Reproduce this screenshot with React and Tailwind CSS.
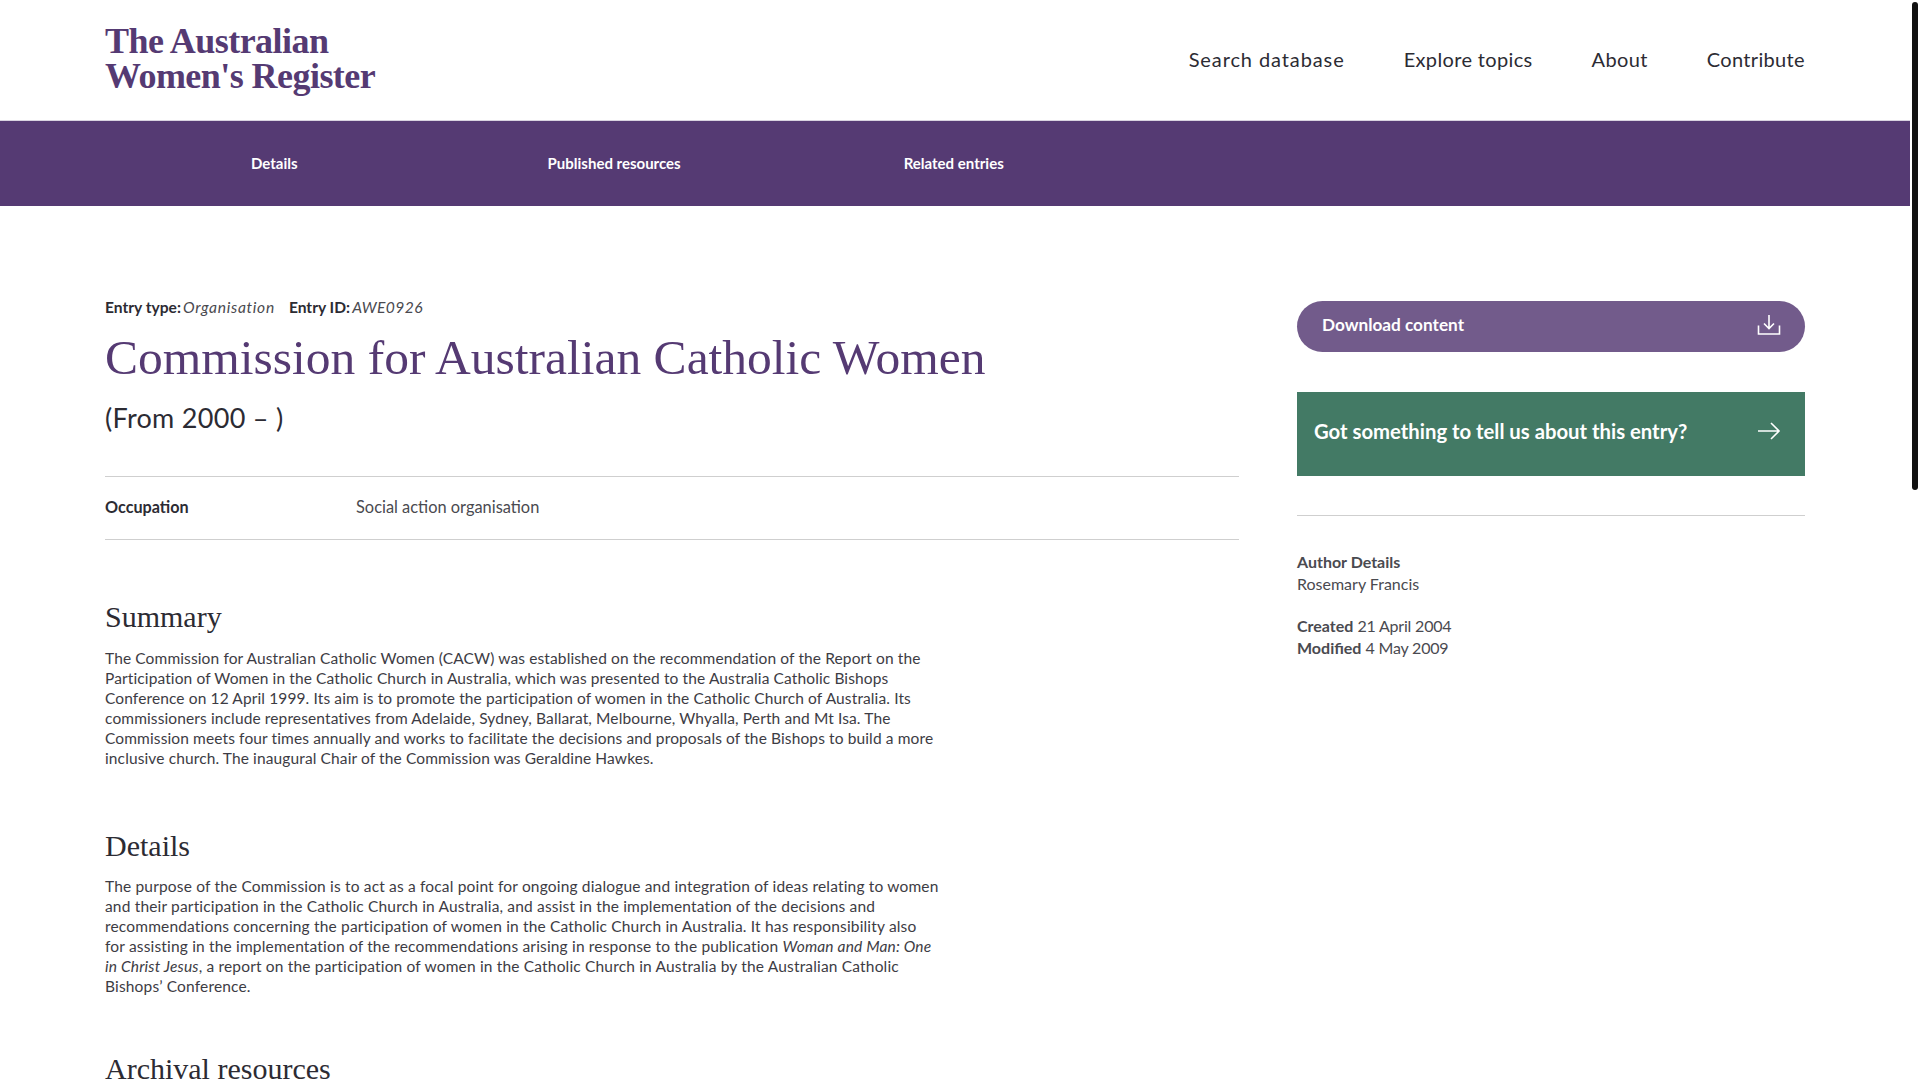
import React from 'react';

const sans = 'font-["Lato","Noto_Sans",sans-serif]';
const serif = 'font-["Liberation_Serif",serif]';

const summaryLines = [
  'The Commission for Australian Catholic Women (CACW) was established on the recommendation of the Report on the',
  'Participation of Women in the Catholic Church in Australia, which was presented to the Australia Catholic Bishops',
  'Conference on 12 April 1999. Its aim is to promote the participation of women in the Catholic Church of Australia. Its',
  'commissioners include representatives from Adelaide, Sydney, Ballarat, Melbourne, Whyalla, Perth and Mt Isa. The',
  'Commission meets four times annually and works to facilitate the decisions and proposals of the Bishops to build a more',
  'inclusive church. The inaugural Chair of the Commission was Geraldine Hawkes.',
];

const DownloadIcon = () => (
  <svg width="24" height="22" viewBox="0 0 24 22" fill="none" stroke="currentColor" strokeWidth="1.6">
    <path d="M12 1v13M7 9.5l5 5 5-5" />
    <path d="M1.5 11.5v8.5h21v-8.5" />
  </svg>
);

const ArrowIcon = () => (
  <svg width="24" height="20" viewBox="0 0 24 20" fill="none" stroke="currentColor" strokeWidth="1.6">
    <path d="M1 10h21M14 2l8 8-8 8" />
  </svg>
);

const Line = ({ children }) => <span className="block whitespace-nowrap">{children}</span>;

export default function App() {
  return (
    <div className={`${sans} h-screen w-full overflow-hidden bg-white flex text-[#2c2b33]`}>
      <div className="w-[1910px] shrink-0">
        <header className="h-[121px] border-b border-[#d8d3e0] px-[105px] flex items-center justify-between">
          <div className={`${serif} font-bold text-[36px] leading-[35px] text-[#553a73] tracking-[-0.55px] pb-[3px]`}>
            <div>The Australian</div>
            <div>Women's Register</div>
          </div>
          <nav className="flex gap-[59px] text-[20px] tracking-[0.35px] pb-[2px] text-[#2c2b33]">
            <a className="tracking-[0.9px]">Search database</a>
            <a>Explore topics</a>
            <a>About</a>
            <a>Contribute</a>
          </nav>
        </header>

        <div className="h-[85px] bg-[#553a73] text-white text-[15px] font-bold flex items-center">
          <a className="ml-[251px]">Details</a>
          <a className="ml-[250px]">Published resources</a>
          <a className="ml-[223px]">Related entries</a>
        </div>

        <div className="px-[105px] flex justify-between">
          <main className="w-[1134px]">
            <div className="mt-[90px] h-[22px] text-[15.6px] leading-[22px] flex gap-[14px]">
              <span><b>Entry type:</b><i className="ml-[2px] tracking-[0.7px] text-[#4a4a50]">Organisation</i></span>
              <span><b>Entry ID:</b><i className="ml-[2px] tracking-[0.4px] text-[#4a4a50]">AWE0926</i></span>
            </div>
            <h1 className={`${serif} mt-[12px] text-[49.5px] leading-[56px] text-[#553a73]`}>
              Commission for Australian Catholic Women
            </h1>
            <p className="mt-[15px] text-[27px] leading-[34px] tracking-[0.3px]">(From 2000 – )</p>
            <div className="mt-[41px] h-[64px] border-y border-[#cfcfcf] flex items-center text-[16.4px] pb-[2px]">
              <b className="w-[251px] text-[16.2px]">Occupation</b>
              <span className="text-[#4a4a50]">Social action organisation</span>
            </div>

            <h2 className={`${serif} mt-[59px] text-[30px] leading-[36px]`}>Summary</h2>
            <p className="mt-[13px] text-[15.5px] tracking-[0.12px] leading-[20px] text-[#3d3c44]">
              {summaryLines.map((line) => (
                <Line key={line}>{line}</Line>
              ))}
            </p>

            <h2 className={`${serif} mt-[60px] text-[30px] leading-[36px]`}>Details</h2>
            <p className="mt-[12px] text-[15.5px] tracking-[0.17px] leading-[20px] text-[#3d3c44]">
              <Line>The purpose of the Commission is to act as a focal point for ongoing dialogue and integration of ideas relating to women</Line>
              <Line>and their participation in the Catholic Church in Australia, and assist in the implementation of the decisions and</Line>
              <Line>recommendations concerning the participation of women in the Catholic Church in Australia. It has responsibility also</Line>
              <Line>for assisting in the implementation of the recommendations arising in response to the publication <i>Woman and Man: One</i></Line>
              <Line><i>in Christ Jesus</i>, a report on the participation of women in the Catholic Church in Australia by the Australian Catholic</Line>
              <Line>Bishops’ Conference.</Line>
            </p>

            <h2 className={`${serif} mt-[55px] text-[30px] leading-[36px]`}>Archival resources</h2>
          </main>

          <aside className="w-[508px] mt-[95px]">
            <a className="h-[51px] rounded-full bg-[#725b8b] text-white font-bold text-[17.2px] pl-[25px] pr-[24px] pb-[3px] flex items-center justify-between">
              <span>Download content</span>
              <DownloadIcon />
            </a>
            <a className="mt-[40px] h-[84px] bg-[#437a65] text-white font-bold text-[20.3px] pl-[17px] pr-[24px] pb-[6px] flex items-center justify-between">
              <span>Got something to tell us about this entry?</span>
              <ArrowIcon />
            </a>
            <div className="mt-[39px] border-t border-[#cfcfcf] pt-[35px] text-[16px] leading-[22px] text-[#4a4a50]">
              <b className="block">Author Details</b>
              <div>Rosemary Francis</div>
              <div className="mt-[20px]"><b>Created</b> <span className="tracking-[-0.2px]">21 April 2004</span></div>
              <div><b>Modified</b> <span className="tracking-[-0.2px]">4 May 2009</span></div>
            </div>
          </aside>
        </div>
      </div>
      <div className="flex-1 relative">
        <div className="absolute left-[2px] top-[2px] w-[6px] h-[488px] rounded-full bg-[#111]" />
      </div>
    </div>
  );
}
